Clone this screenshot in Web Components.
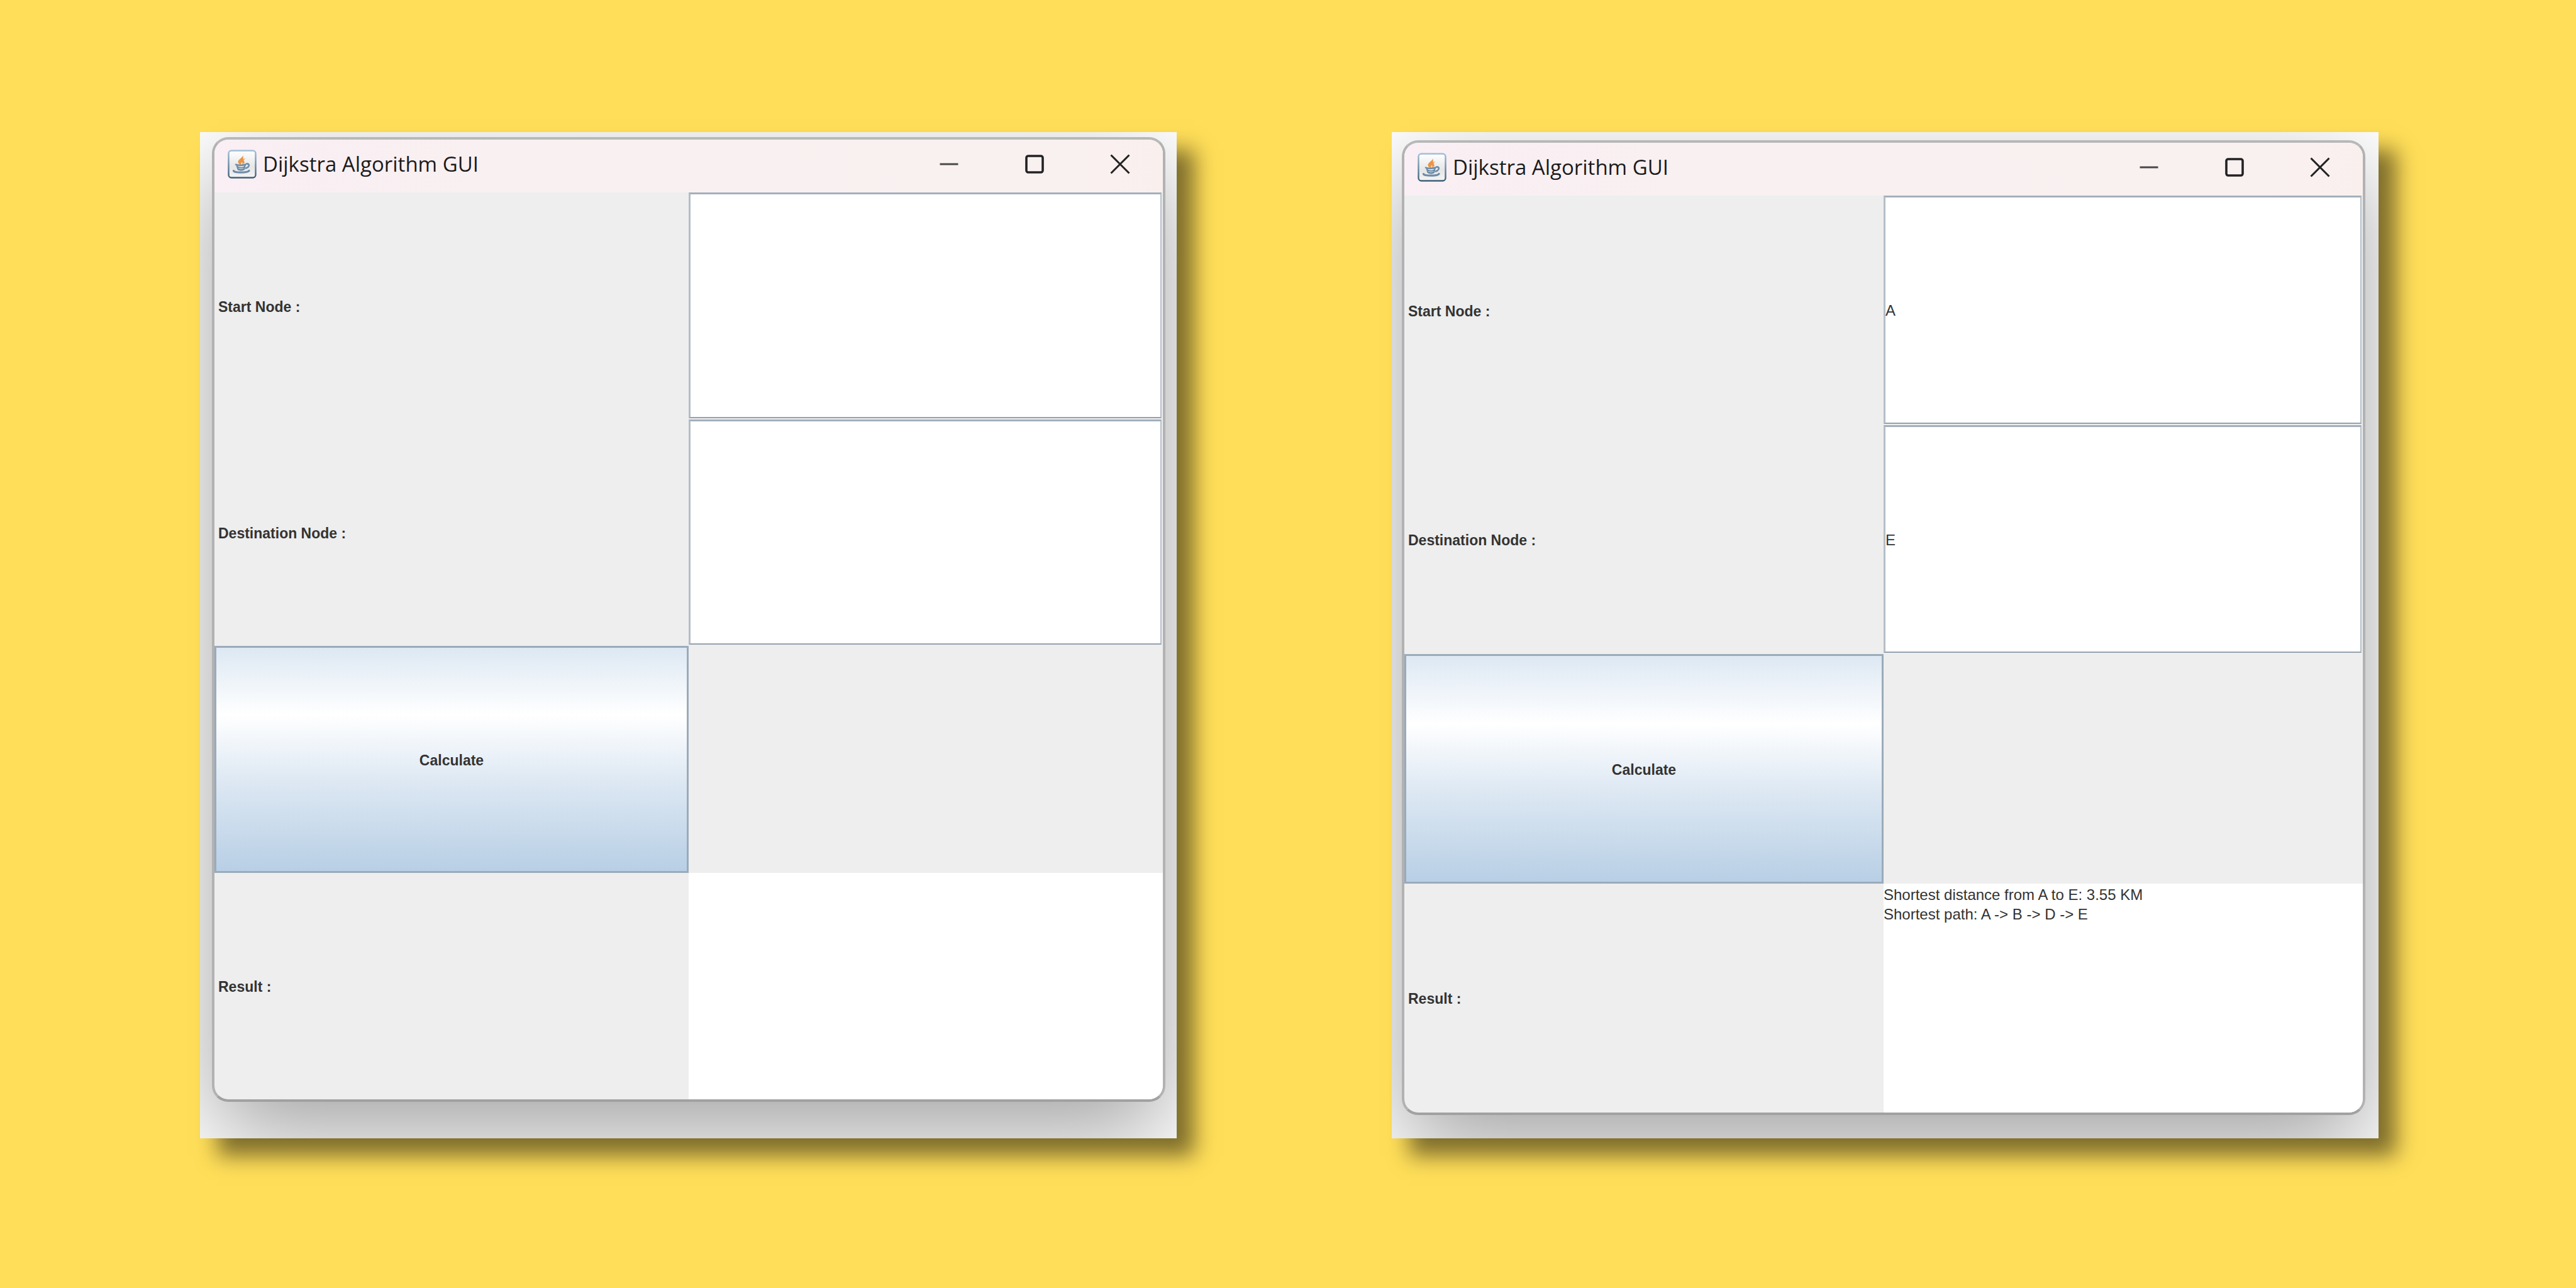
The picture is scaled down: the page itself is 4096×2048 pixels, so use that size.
<!DOCTYPE html>
<html lang="en">
<head>
<meta charset="utf-8">
<title>Dijkstra Algorithm GUI</title>
<style>
  html, body { height: 100%; margin: 0; }
  body { background: #ffde59; font-family: "Liberation Sans", Arial, sans-serif; }
</style>
</head>
<body>
<showcase-board>
  <window-shot class="first">
    <app-window heading="Dijkstra Algorithm GUI">
      <path-form></path-form>
    </app-window>
  </window-shot>
  <window-shot class="second">
    <app-window heading="Dijkstra Algorithm GUI">
      <path-form start="A" destination="E" result="Shortest distance from A to E: 3.55 KM&#10;Shortest path: A -&gt; B -&gt; D -&gt; E"></path-form>
    </app-window>
  </window-shot>
</showcase-board>

<script>
const attach = (host, html) => {
  const t = document.createElement('template');
  t.innerHTML = html;
  host.attachShadow({ mode: 'open' }).append(t.content.cloneNode(true));
  return host.shadowRoot;
};

customElements.define('showcase-board', class extends HTMLElement {
  constructor() {
    super();
    attach(this, `
      <style>
        :host { box-sizing: border-box; display: grid; height: 100%;
          grid-template-columns: 1553fr 1569fr; column-gap: 342px;
          padding: 210px 314px 238px 318px; }
        ::slotted(.first) { padding: 8px 18px 58px 19px; }
        ::slotted(.second) { padding: 13px 21px 37px 16px; }
      </style>
      <slot></slot>`);
  }
});

customElements.define('window-shot', class extends HTMLElement {
  constructor() {
    super();
    attach(this, `
      <style>
        :host { box-sizing: border-box; display: grid; overflow: hidden;
          background: #fff; box-shadow: 28px 28px 32px rgba(0,0,0,.5); }
      </style>
      <slot></slot>`);
  }
});

customElements.define('java-icon', class extends HTMLElement {
  constructor() {
    super();
    attach(this, `
      <style>
        :host { display: block; width: 46px; height: 46px; }
        svg { display: block; width: 100%; height: 100%; }
      </style>
      <svg viewBox="0 0 46 46" aria-hidden="true">
        <defs>
          <linearGradient id="edge" x1="0" y1="0" x2="0" y2="1">
            <stop offset="0" stop-color="#a3bfd6"/><stop offset=".5" stop-color="#6e8fa9"/><stop offset="1" stop-color="#3f6078"/>
          </linearGradient>
          <linearGradient id="face" x1="0" y1="0" x2="0" y2="1">
            <stop offset="0" stop-color="#fff"/><stop offset=".6" stop-color="#e6e6e6"/><stop offset="1" stop-color="#f4f4f4"/>
          </linearGradient>
        </defs>
        <rect x="1.5" y="1.5" width="43" height="43" rx="4.5" fill="url(#face)" stroke="url(#edge)" stroke-width="2.4"/>
        <path d="M24 8C25.500 12 16.500 15 16.500 19.500C16.500 22 19 23.500 21 24C20.500 20 27 18 24 8Z" fill="#ea9445"/>
        <path d="M28.500 13.500C23 15.500 21 17.500 23 20C24 21.500 23.500 23 21 24C28 22.500 27.500 19 25.500 17.500C25.500 16 27 15 28.500 13.500Z" fill="#ea9445"/>
        <g fill="none" stroke="#6d8ca8" stroke-linecap="round">
          <path d="M13 23.500C16 25.500 25 25 28.500 23.500" stroke-width="2.600"/>
          <path d="M14.500 24.500L16.500 31C19 32.500 24 32.500 26 31L27.500 25" stroke-width="2.400"/>
          <path d="M16.500 27.800C19 28.800 24 28.800 26.500 27.800" stroke-width="2.200"/>
          <path d="M17.500 31.200C20 32.200 23 32.200 25 31.200" stroke-width="2.800"/>
          <path d="M30 22.500C35 21.500 35.500 27 29 29.500" stroke-width="2.600"/>
          <path d="M9.500 33.500C9 37 32 37 34 33.500" stroke-width="3.200"/>
        </g>
      </svg>`);
  }
});

customElements.define('app-window', class extends HTMLElement {
  constructor() {
    super();
    const root = attach(this, `
      <style>
        :host { display: flex; flex-direction: column; overflow: hidden; min-width: 0;
          border: 4px solid #b0b0b0; border-color: #b8b8b8 #b2b2b2 #a1a1a1;
          border-radius: 26px; background: #eee;
          box-shadow: 0 52px 150px rgba(0,0,0,.36); }
        header { box-sizing: border-box; display: flex; align-items: center; height: 84px;
          padding: 0 0 6px 21px; gap: 10px;
          background: linear-gradient(90deg, #f9eff4, #f9f0f1 30%, #f9f0f0 90%, #f9f0ee); }
        h1 { flex: 1; margin: 0; color: #1b1b1b; font: 400 33px/44px "Open Sans", "Noto Sans", sans-serif; white-space: nowrap; }
        nav { display: flex; }
        button { display: grid; place-items: center; width: 136px; height: 78px; padding: 0; border: 0; background: none; }
        svg { display: block; width: 32px; height: 32px; fill: none; stroke: #222; stroke-width: 3; }
        ::slotted(*) { flex: 1; }
      </style>
      <header>
        <java-icon></java-icon>
        <h1></h1>
        <nav>
          <button type="button" aria-label="Minimize"><svg viewBox="0 0 32 32"><path d="M1.500 16H30.500" stroke="#4a4748"/></svg></button>
          <button type="button" aria-label="Maximize"><svg viewBox="0 0 32 32"><rect x="3" y="3" width="26" height="26" rx="3" stroke-width="3.600"/></svg></button>
          <button type="button" aria-label="Close"><svg viewBox="0 0 32 32"><path d="M1.500 1.500L30.500 30.500M30.500 1.500L1.500 30.500"/></svg></button>
        </nav>
      </header>
      <slot></slot>`);
    root.querySelector('h1').textContent = this.getAttribute('heading');
  }
});

customElements.define('path-form', class extends HTMLElement {
  constructor() {
    super();
    const root = attach(this, `
      <style>
        :host { display: grid; min-height: 0; }
        form { display: grid; grid-template: repeat(4, minmax(0, 1fr)) / repeat(2, minmax(0, 1fr)); }
        label { display: flex; align-items: center; padding: 3px 0 0 6px; }
        label, button { color: #333; font: 700 23px/30px "Liberation Sans", Arial, sans-serif; }
        .field { display: grid; padding: 0 2px 2px 0; }
        input, textarea { box-sizing: border-box; width: 100%; height: 100%; margin: 0; border-radius: 0; background: #fff;
          color: #333; font: 400 24px/31px "Liberation Sans", Arial, sans-serif; outline: 0; }
        input { padding: 3px 0 0; border: 3px solid #b4bec8; border-width: 3px 2px 2px 3px; border-bottom-color: #94a1ae; border-top-color: #a3afbb; }
        textarea { display: block; padding: 2px 0 0; border: 0; resize: none; overflow: hidden; }
        button { margin: 0; padding: 3px 0 0; border: 3px solid #9aabba; border-radius: 0;
          background: linear-gradient(#dde8f3, #fff 30%, #dde8f3 60%, #b8cfe5); }
      </style>
      <form>
        <label for="start">Start Node :</label>
        <div class="field"><input id="start" type="text" autocomplete="off"></div>
        <label for="destination">Destination Node :</label>
        <div class="field"><input id="destination" type="text" autocomplete="off"></div>
        <button type="button">Calculate</button>
        <span></span>
        <label for="result">Result :</label>
        <textarea id="result" readonly></textarea>
      </form>`);
    root.getElementById('start').value = this.getAttribute('start') || '';
    root.getElementById('destination').value = this.getAttribute('destination') || '';
    root.getElementById('result').value = this.getAttribute('result') || '';
  }
});
</script>
</body>
</html>
